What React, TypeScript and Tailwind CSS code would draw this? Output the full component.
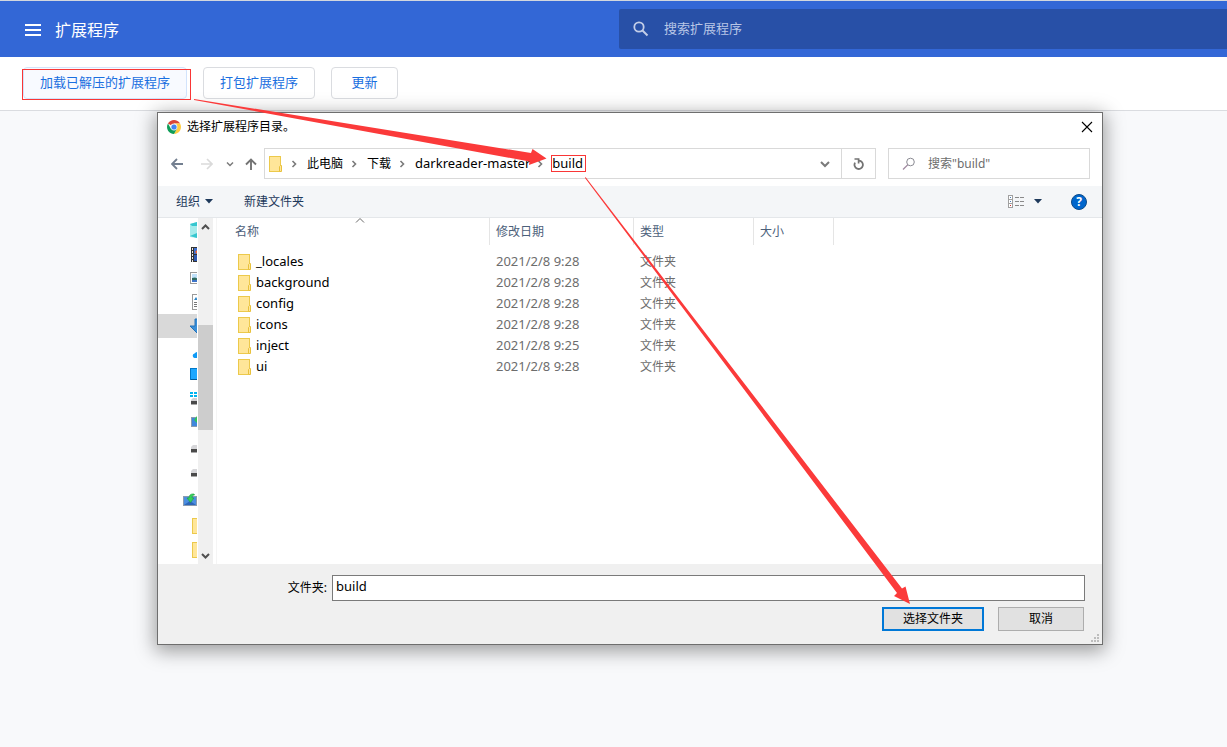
import type { ReactNode } from "react";

const folders = [
  { name: "_locales", date: "2021/2/8 9:28" },
  { name: "background", date: "2021/2/8 9:28" },
  { name: "config", date: "2021/2/8 9:28" },
  { name: "icons", date: "2021/2/8 9:28" },
  { name: "inject", date: "2021/2/8 9:25" },
  { name: "ui", date: "2021/2/8 9:28" },
];

const FolderIcon = () => (
  <svg width="14" height="16" viewBox="0 0 14 16" className="flex-none">
    <rect x="0.5" y="0.5" width="11" height="15" fill="#ffe699" stroke="#ecc94b" />
    <path d="M10.5 15.5V10.5L11.5 9.5H12.5V15.5Z" fill="#ffe699" stroke="#e8c13c" />
  </svg>
);

const Chevron = () => (
  <svg width="24" height="10" viewBox="0 0 24 10" className="flex-none">
    <path d="M9.5 2L12.5 5L9.5 8" fill="none" stroke="#7a7a7a" strokeWidth="1.6" />
  </svg>
);

const ChromeIcon = () => (
  <svg width="14" height="14" viewBox="0 0 14 14" className="flex-none">
    <path d="M7 7L0.94 3.5A7 7 0 0 1 13.06 3.5L7 3.5Z" fill="#db4437" />
    <path d="M7 7L7 3.5L13.06 3.5A7 7 0 0 1 7 14L10 8.7Z" fill="#ffcd40" />
    <path d="M7 7L10 8.7L7 14A7 7 0 0 1 0.94 3.5L4 8.7Z" fill="#0f9d58" />
    <circle cx="7" cy="7" r="3.4" fill="#f1f1f1" />
    <circle cx="7" cy="7" r="2.6" fill="#4285f4" />
  </svg>
);

const driveShape = (
  <>
    <path d="M2 7V5L4 3H15V7Z" fill="#d6d6d9" />
    <rect x="2" y="7" width="13" height="4" fill="#4a4a4a" />
    <path d="M2 10.5H15" stroke="#a8a8a8" />
  </>
);

const folderShape = (
  <rect x="3.5" y="0.5" width="12" height="15" fill="#ffe699" stroke="#ecc94b" />
);

const treeIcons: { label: string; rowClass?: string; shape: ReactNode }[] = [
  {
    label: "3D 对象",
    shape: (
      <>
        <path d="M1 2L8 0L15 2V15L8 16L1 15Z" fill="#a5ebeb" />
        <path d="M1 2L8 0V4L3 4ZM1 14L8 11V16Z" fill="#35c6cf" />
      </>
    ),
  },
  {
    label: "视频",
    shape: (
      <>
        <rect x="2" y="1" width="13" height="15" fill="#333" />
        <rect x="5" y="2" width="9" height="6" fill="#3b6fd0" />
        <rect x="5" y="9" width="9" height="6" fill="#2c57b0" />
        <path d="M6 6L8 4V8Z" fill="#f06a3a" />
        <path d="M3.5 2V16" stroke="#e8e8e8" strokeDasharray="2 1" />
      </>
    ),
  },
  {
    label: "图片",
    shape: (
      <>
        <rect x="1.5" y="2.5" width="14" height="11" fill="#fff" stroke="#9a9a9a" />
        <rect x="3" y="4" width="12" height="8" fill="#bfe0fa" />
        <path d="M3 8L6 7.5L10 9V10H3Z" fill="#2f6a60" />
        <rect x="3" y="10" width="12" height="2" fill="#3c73c8" />
      </>
    ),
  },
  {
    label: "文档",
    shape: (
      <>
        <rect x="3.5" y="0.5" width="11" height="15" fill="#fff" stroke="#9a9a9a" />
        <path d="M5 6L7 3L9 6Z" fill="#2f86c8" />
        <path d="M5 8.5H13M5 10.5H13M5 12.5H13" stroke="#777" />
      </>
    ),
  },
  {
    label: "下载",
    rowClass: "bg-[#d9d9d9]",
    shape: <path d="M6 1H10V8H15L8 15L1 8H6Z" fill="#3a8fd8" stroke="#2472b8" />,
  },
  {
    label: "OneDrive",
    shape: (
      <path d="M5.5 16A2.3 2.3 0 0 1 5.5 11.5C7 9.5 10 9.5 11 11.5L14 16Z" fill="#0f9af5" />
    ),
  },
  {
    label: "桌面",
    shape: (
      <>
        <rect x="1.5" y="2.5" width="14" height="11" fill="#1ca7ff" stroke="#0078c8" />
        <path d="M2 13.5H15" stroke="#005a9a" />
      </>
    ),
  },
  {
    label: "系统盘",
    shape: (
      <>
        <path d="M1 2H4V4H1ZM5 2H8V4H5ZM1 5H4V7H1ZM5 5H8V7H5Z" fill="#00b4f0" />
        <path d="M2 11V10L4 8H15V11Z" fill="#cfcfd2" />
        <rect x="2" y="11" width="13" height="3" fill="#4a4a4a" />
        <path d="M2 14.5H15" stroke="#a8a8a8" />
      </>
    ),
  },
  {
    label: "网络位置",
    shape: (
      <>
        <rect x="2.5" y="3.5" width="12" height="9" fill="#3f87dc" stroke="#8a9bb0" />
        <path d="M5 6L8 2V9Z" fill="#2fc45a" />
      </>
    ),
  },
  { label: "本地磁盘 D", rowClass: "mt-1", shape: driveShape },
  { label: "本地磁盘 E", shape: driveShape },
  {
    label: "共享",
    rowClass: "mt-0.5 -translate-x-1.5",
    shape: (
      <>
        <rect x="0.5" y="4.5" width="13" height="9" fill="#4b8ee0" stroke="#8a9bb0" />
        <path d="M1 13L7 9L13 13Z" fill="#2c66b8" />
        <path d="M11 2C7 1.5 6 4 6 6H4L7.5 10.5L11 6H9C9 4 10 3 11.5 3Z" fill="#35d05a" stroke="#1f9e3e" strokeWidth="0.6" />
      </>
    ),
  },
  { label: "文件夹 1", rowClass: "mt-0.5", shape: folderShape },
  { label: "文件夹 2", shape: folderShape },
];

const Header = () => (
  <header className="flex h-[57px] items-stretch border-t border-[#d3d7de] bg-[#3367d6] text-white">
    <div className="flex w-[619px] flex-none items-center pl-[25px] pt-px">
      <button type="button" aria-label="主菜单">
        <svg width="16" height="12" viewBox="0 0 16 12" className="block">
          <path d="M0 1H16M0 6H16M0 11H16" stroke="#fff" strokeWidth="2" />
        </svg>
      </button>
      <h1 className="pl-[14px] text-[16px] leading-6">扩展程序</h1>
    </div>
    <label className="my-2 flex flex-1 items-center rounded-l-[2px] bg-[#2850a7] pl-[13px]">
      <svg width="18" height="18" viewBox="0 0 18 18" className="flex-none">
        <circle cx="7" cy="7" r="4.7" fill="none" stroke="#c3cee8" strokeWidth="1.8" />
        <path d="M10.5 10.5L15.5 15.5" stroke="#c3cee8" strokeWidth="2" />
      </svg>
      <input
        type="text"
        aria-label="搜索扩展程序"
        placeholder="搜索扩展程序"
        className="ml-[14px] w-full bg-transparent text-[13px] text-white outline-none placeholder:text-[#b8c6e6]"
      />
    </label>
  </header>
);

const Toolbar = () => (
  <div className="flex gap-4 border-b border-[#dadce0] bg-white pb-[11px] pl-[23px] pt-[10px] text-[13px] text-[#1a6fe0]">
    <button type="button" className="h-8 rounded-[4px] border border-[#d2e3fc] bg-[#f8faff] px-4">
      加载已解压的扩展程序
    </button>
    <button type="button" className="h-8 rounded-[4px] border border-[#dadce0] px-4">
      打包扩展程序
    </button>
    <button type="button" className="h-8 w-[67px] rounded-[4px] border border-[#dadce0]">
      更新
    </button>
  </div>
);

const AddressRow = () => (
  <div className="flex h-[31px] items-stretch pl-1 pr-3">
    <button type="button" aria-label="后退" className="flex w-[30px] items-center justify-center">
      <svg width="12" height="12" viewBox="0 0 12 12">
        <path d="M12 6H1M6 1L1 6L6 11" fill="none" stroke="#737f90" strokeWidth="1.8" />
      </svg>
    </button>
    <button type="button" aria-label="前进" className="flex w-[30px] items-center justify-center">
      <svg width="12" height="12" viewBox="0 0 12 12">
        <path d="M0 6H11M6 1L11 6L6 11" fill="none" stroke="#dadada" strokeWidth="1.6" />
      </svg>
    </button>
    <button type="button" aria-label="最近位置" className="flex w-4 items-center justify-center">
      <svg width="8" height="6" viewBox="0 0 8 6">
        <path d="M1 1.5L4 4.5L7 1.5" fill="none" stroke="#7a7a7a" strokeWidth="1.5" />
      </svg>
    </button>
    <button type="button" aria-label="上移" className="flex w-[26px] items-center justify-center">
      <svg width="12" height="12" viewBox="0 0 12 12">
        <path d="M6 12V1.5M1 6.5L6 1.5L11 6.5" fill="none" stroke="#737373" strokeWidth="1.9" />
      </svg>
    </button>
    <div className="flex flex-1 items-center border border-[#d9d9d9] pl-1 text-[12px] text-black">
      <FolderIcon />
      <Chevron />
      <span>此电脑</span>
      <Chevron />
      <span>下载</span>
      <Chevron />
      <span className="text-[13px]">darkreader-master</span>
      <svg width="22" height="10" viewBox="0 0 22 10" className="flex-none">
        <path d="M8.5 2L11.5 5L8.5 8" fill="none" stroke="#7a7a7a" strokeWidth="1.6" />
      </svg>
      <span className="text-[13px]">build</span>
      <button type="button" aria-label="展开" className="ml-auto flex w-8 justify-center">
        <svg width="10" height="8" viewBox="0 0 10 8">
          <path d="M1 2L5 6L9 2" fill="none" stroke="#7a7a7a" strokeWidth="2" />
        </svg>
      </button>
      <button type="button" aria-label="刷新" className="flex w-[34px] items-center justify-center self-stretch border-l border-[#d9d9d9]">
        <svg width="12" height="12" viewBox="0 0 12 12">
          <path d="M2.1 4.6A4.2 4.2 0 1 0 6 2.6" fill="none" stroke="#737373" strokeWidth="1.8" />
          <path d="M1.5 1H5.6V5.5" fill="none" stroke="#737373" strokeWidth="1.7" />
        </svg>
      </button>
    </div>
    <label className="ml-3 flex w-[202px] items-center border border-[#d9d9d9] pl-[13px]">
      <svg width="14" height="14" viewBox="0 0 14 14" className="flex-none">
        <circle cx="8.5" cy="5" r="3.8" fill="none" stroke="#8a8a92" />
        <path d="M5.8 7.8L1 12.5" stroke="#a08aa0" strokeWidth="1.2" />
      </svg>
      <input
        type="text"
        aria-label="搜索"
        placeholder={'搜索"build"'}
        className="ml-3 w-full bg-transparent text-[12px] outline-none placeholder:text-[#6d6d6d]"
      />
    </label>
  </div>
);

const CommandBar = () => (
  <div className="mt-[7px] flex h-8 items-center border-b border-[#e4e7ea] bg-[#f4f6f8] pl-[18px] pr-[15px] text-[12px] text-[#1e395b]">
    <button type="button" className="flex items-center gap-[5px]">
      组织
      <svg width="8" height="5" viewBox="0 0 8 5">
        <path d="M0 0H8L4 4.5Z" fill="#1e395b" />
      </svg>
    </button>
    <button type="button" className="ml-[31px]">新建文件夹</button>
    <button type="button" aria-label="更改视图" className="ml-auto flex items-center gap-[9px]">
      <svg width="17" height="13" viewBox="0 0 17 13">
        <rect x="0.5" y="0.5" width="4" height="12" fill="#fff" stroke="#a0a0a0" />
        <path d="M0 4.5H5M0 8.5H5" stroke="#a0a0a0" />
        <path d="M2 2.5H3M2 6.5H3" stroke="#4a7fb8" />
        <path d="M2 10.5H3" stroke="#d03030" />
        <path d="M7 2.5H11M7 6.5H11M7 10.5H11M12 2.5H16M12 6.5H16M12 10.5H16" stroke="#8a8a8a" />
      </svg>
      <svg width="8" height="5" viewBox="0 0 8 5">
        <path d="M0 0H8L4 4.5Z" fill="#1e395b" />
      </svg>
    </button>
    <button
      type="button"
      aria-label="帮助"
      className="ml-[29px] flex h-4 w-4 items-center justify-center rounded-full border border-[#0b4a8a] bg-[#0066cc] text-[12px] font-bold leading-3 text-white"
    >
      ?
    </button>
  </div>
);

const FolderTree = () => (
  <div className="flex flex-none">
    <ul className="w-[39px] overflow-hidden">
      {treeIcons.map((item) => (
        <li key={item.label} className={item.rowClass}>
          <a href="#" aria-label={item.label} className="flex h-6 items-center pl-[31px]">
            <svg width="16" height="16" viewBox="0 0 16 16" className="flex-none">
              {item.shape}
            </svg>
          </a>
        </li>
      ))}
    </ul>
    <div className="ml-px flex w-[15px] flex-col items-center bg-[#f0f0f0]">
      <svg width="9" height="6" viewBox="0 0 9 6" className="my-[6px] flex-none">
        <path d="M1 5L4.5 1.5L8 5" fill="none" stroke="#505050" strokeWidth="2" />
      </svg>
      <div className="mt-[89px] h-[105px] w-full flex-none bg-[#cdcdcd]" />
      <svg width="9" height="6" viewBox="0 0 9 6" className="mb-[5px] mt-auto flex-none">
        <path d="M1 1L4.5 4.5L8 1" fill="none" stroke="#505050" strokeWidth="2" />
      </svg>
    </div>
  </div>
);

const HeaderCell = ({ children, first }: { children?: ReactNode; first?: boolean }) => (
  <th className="relative p-0 pb-[6px] font-normal">
    {first && (
      <svg width="11" height="5" viewBox="0 0 11 5" className="absolute left-1/2 top-0">
        <path d="M2 4.5L6 0.5L10 4.5" fill="none" stroke="#6a6a6a" />
      </svg>
    )}
    <div
      className={
        first
          ? "h-[27px] border-r border-[#e5e5e5] pl-[18px] text-left leading-[27px]"
          : "h-[27px] border-r border-[#e5e5e5] pl-[6px] text-left leading-[27px]"
      }
    >
      {children}
    </div>
  </th>
);

const FileTable = () => (
  <div className="ml-[3px] flex-1 border-l border-[#f5f5f5]">
    <table className="w-full table-fixed border-collapse text-[12px]">
      <colgroup>
        <col className="w-[273px]" />
        <col className="w-[144px]" />
        <col className="w-[120px]" />
        <col className="w-[80px]" />
        <col />
      </colgroup>
      <thead>
        <tr className="text-[#4c607a]">
          <HeaderCell first>名称</HeaderCell>
          <HeaderCell>修改日期</HeaderCell>
          <HeaderCell>类型</HeaderCell>
          <HeaderCell>大小</HeaderCell>
          <td />
        </tr>
      </thead>
      <tbody>
        {folders.map((folder) => (
          <tr key={folder.name} className="h-[21px] text-[#6d6d6d]">
            <td className="p-0 pl-[21px]">
              <div className="flex h-[21px] items-center gap-1 text-[13px] leading-[21px] text-black">
                <FolderIcon />
                {folder.name}
              </div>
            </td>
            <td className="p-0 pl-[6px] text-[13px] leading-[21px]">{folder.date}</td>
            <td className="p-0 pl-[6px] leading-[21px]">文件夹</td>
            <td />
            <td />
          </tr>
        ))}
      </tbody>
    </table>
  </div>
);

const DialogFooter = () => (
  <div className="relative bg-[#f0f0f0] pb-[13px] pr-[17px] pt-[11px] text-[12px] text-black">
    <div className="flex items-center">
      <label htmlFor="folder" className="w-[174px] flex-none pr-[5px] text-right">
        文件夹:
      </label>
      <input
        id="folder"
        type="text"
        defaultValue="build"
        className="h-[26px] w-full border border-[#7a7a7a] bg-white px-[3px] pb-1 text-[13px] outline-none"
      />
    </div>
    <div className="mr-px mt-[6px] flex justify-end gap-[14px]">
      <button type="button" className="h-6 w-[102px] border-2 border-[#0078d7] bg-[#e1e1e1]">
        选择文件夹
      </button>
      <button type="button" className="h-6 w-[86px] border border-[#adadad] bg-[#e1e1e1]">
        取消
      </button>
    </div>
    <svg width="8" height="8" viewBox="0 0 8 8" className="absolute bottom-0.5 right-[3px]">
      <path
        d="M6 0h2v2h-2zM3 3h2v2h-2zM6 3h2v2h-2zM0 6h2v2h-2zM3 6h2v2h-2zM6 6h2v2h-2z"
        fill="#bdbdbd"
      />
    </svg>
  </div>
);

const FolderDialog = () => (
  <section
    role="dialog"
    aria-labelledby="dialog-title"
    className="relative ml-[157px] mr-[124px] mt-px border border-[#6e6e6e] bg-white shadow-[0_4px_18px_2px_rgba(0,0,0,0.38)]"
  >
    <div className="flex h-7 items-center px-[9px]">
      <ChromeIcon />
      <h2 id="dialog-title" className="pl-[6px] text-[12px] text-black">
        选择扩展程序目录。
      </h2>
      <button type="button" aria-label="关闭" className="ml-auto">
        <svg width="12" height="12" viewBox="0 0 12 12" className="block">
          <path d="M1 1L11 11M11 1L1 11" stroke="#000" strokeWidth="1.1" />
        </svg>
      </button>
    </div>
    <div className="pt-[7px]">
      <AddressRow />
      <CommandBar />
    </div>
    <div className="flex h-[346px]">
      <FolderTree />
      <FileTable />
    </div>
    <DialogFooter />
  </section>
);

// Red boxes and arrows that walk through the three steps
const Annotations = () => (
  <svg
    width="1227"
    height="747"
    viewBox="0 0 1227 747"
    className="pointer-events-none absolute left-0 top-0"
  >
    <g fill="none" stroke="#f93636">
      <rect x="22.5" y="69.5" width="168" height="30" />
      <rect x="551.5" y="155.5" width="34" height="16" />
    </g>
    <g fill="#fb3a3a">
      <path d="M194 99L531 153L532.5 149L546.5 158.5L529 165L529.5 161.5L194 100Z" />
      <path d="M585.5 177L902 588.5L905.5 586.5L910 604L894 596L897 593L585 178Z" />
    </g>
  </svg>
);

const App = () => {
  return (
    <div className="relative min-h-screen overflow-hidden bg-[#f8f9fb] font-['Noto_Sans','Noto_Sans_CJK_SC',sans-serif]">
      <Header />
      <Toolbar />
      <main>
        <FolderDialog />
      </main>
      <Annotations />
    </div>
  );
};

export default App;
